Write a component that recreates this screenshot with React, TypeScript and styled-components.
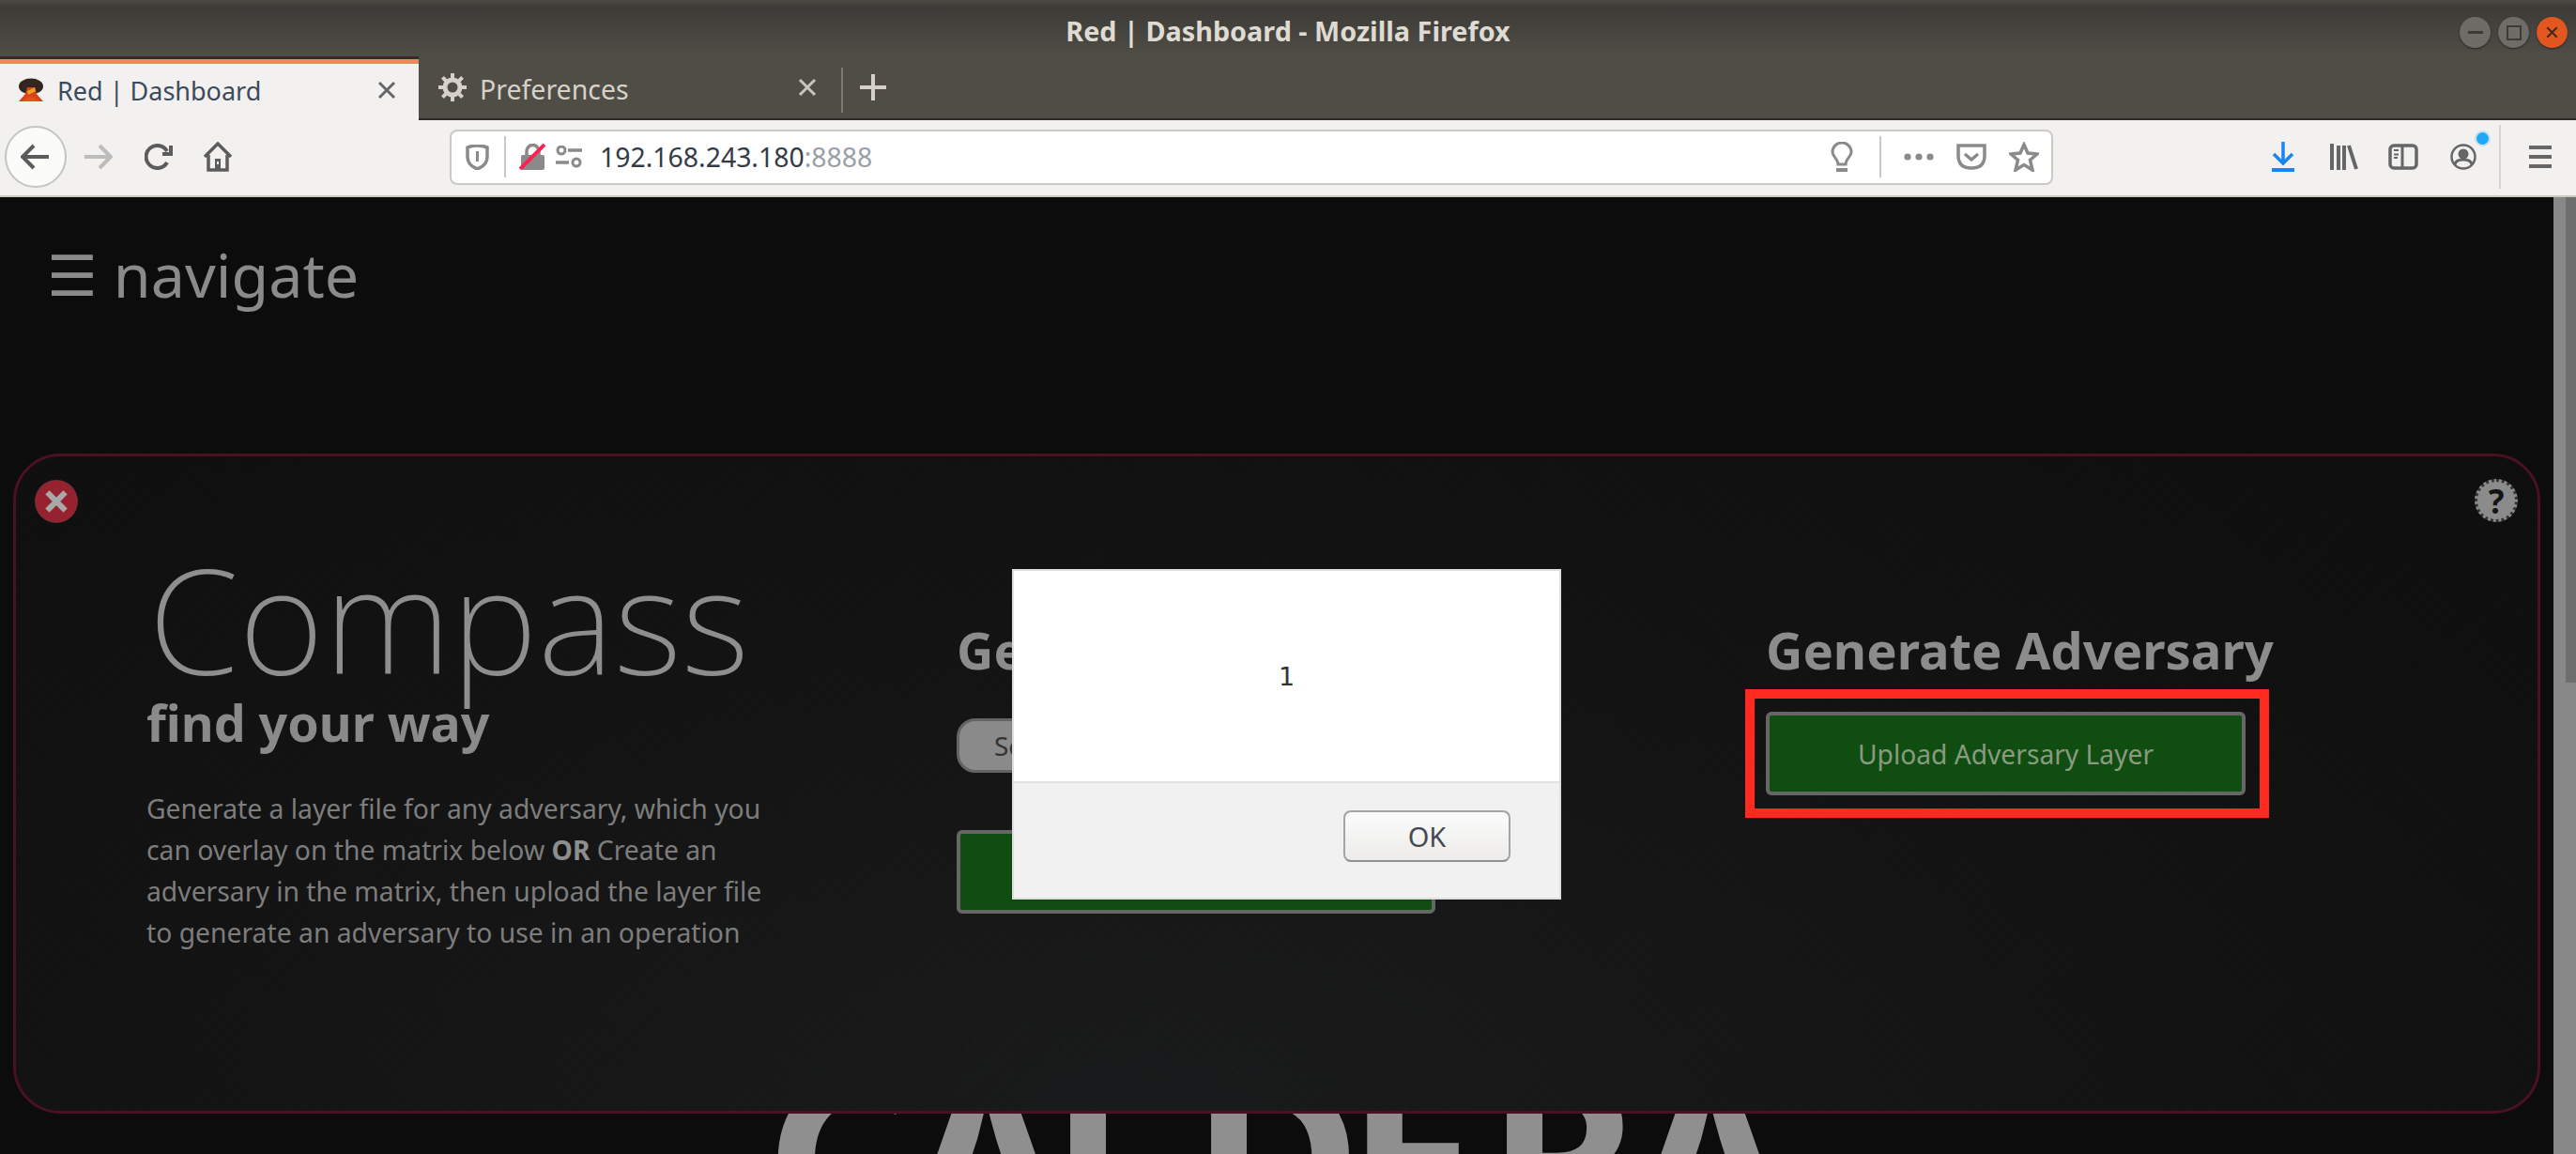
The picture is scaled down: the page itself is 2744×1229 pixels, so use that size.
import React from 'react';
import styled, { createGlobalStyle } from 'styled-components';

const GlobalStyle = createGlobalStyle`
    html, body {
        margin: 0;
        padding: 0;
        background: #0c0c0c;
        overflow: hidden;
    }
    * {
        box-sizing: border-box;
    }
`;

const UI_FONT = `"Noto Sans", "Open Sans", sans-serif`;

const Browser = styled.div`
    width: 2744px;
    height: 1229px;
    display: flex;
    flex-direction: column;
    overflow: hidden;
    font-family: ${UI_FONT};
`;

const TitleBar = styled.header`
    height: 60px;
    flex: none;
    display: flex;
    align-items: center;
    justify-content: center;
    position: relative;
    background: linear-gradient(#4b4a45 0, #3c3b37 8px, #504d46 60px);
    color: #dfdbd2;
    font-size: 28.8px;
    font-weight: 700;
    padding-top: 4px;
`;

const WindowButtons = styled.div`
    position: absolute;
    top: 18px;
    right: 9px;
    display: flex;
    gap: 8px;
`;

const WindowButton = styled.div<{ $close?: boolean }>`
    width: 33px;
    height: 33px;
    border-radius: 50%;
    display: flex;
    align-items: center;
    justify-content: center;
    background: ${(p) => (p.$close ? '#e2561f' : '#6d6c67')};
    box-shadow: 0 1px 2px rgba(0, 0, 0, 0.5);
`;

const TabStrip = styled.nav`
    height: 68px;
    flex: none;
    display: flex;
    background: #504d46;
    border-bottom: 2px solid #2c2b27;
`;

const ActiveTab = styled.div`
    width: 446px;
    height: 68px;
    flex: none;
    display: flex;
    align-items: center;
    padding: 0 24px 0 18px;
    background: #f2f1ef;
    border-top: 3px solid #2f2e2a;
    color: #3c4a5c;
    font-size: 27px;
    box-shadow: inset 0 5px 0 #f4845a;
    z-index: 1;
`;

const IdleTab = styled.div`
    width: 450px;
    height: 66px;
    flex: none;
    display: flex;
    align-items: center;
    padding: 0 26px 0 20px;
    color: #d6d2c9;
    font-size: 28.5px;
`;

const TabLabel = styled.span<{ $left: number; $top: number }>`
    flex: 1;
    margin-left: ${(p) => p.$left}px;
    margin-top: ${(p) => p.$top}px;
    white-space: nowrap;
`;

const TabDivider = styled.div`
    width: 2px;
    height: 48px;
    margin-top: 12px;
    background: #7c7a72;
`;

const NewTab = styled.div`
    margin: 12px 0 0 18px;
    height: 42px;
    display: flex;
    align-items: center;
`;

const Toolbar = styled.div`
    height: 82px;
    flex: none;
    display: flex;
    align-items: center;
    padding: 0 0 2px 5px;
    background: #f2f1ef;
    border-bottom: 2px solid #cbc9c4;
`;

const BackButton = styled.div`
    width: 66px;
    height: 66px;
    flex: none;
    border-radius: 50%;
    background: #fbfbfa;
    border: 2px solid #c4c4c1;
    display: flex;
    align-items: center;
    justify-content: center;
`;

const ToolIcon = styled.div<{ $left: number; $width: number }>`
    flex: none;
    width: ${(p) => p.$width}px;
    margin-left: ${(p) => p.$left}px;
    display: flex;
    align-items: center;
    justify-content: center;
    position: relative;
`;

const UrlBar = styled.div`
    width: 1708px;
    height: 59px;
    flex: none;
    margin-left: 231px;
    display: flex;
    align-items: center;
    background: #fff;
    border: 2px solid #cbc9c4;
    border-radius: 8px;
    padding-left: 15px;
`;

const UrlText = styled.span`
    flex: 1;
    margin-left: 19px;
    font-size: 28.4px;
    color: #333b46;
    white-space: nowrap;
`;

const UrlPort = styled.span`
    color: #9a9ea6;
`;

const UrlDivider = styled.div<{ $left: number }>`
    width: 2px;
    height: 44px;
    flex: none;
    margin-left: ${(p) => p.$left}px;
    background: #c9c8c4;
`;

const ToolDivider = styled.div`
    width: 2px;
    height: 68px;
    flex: none;
    margin-left: 24px;
    background: #d6d5d2;
`;

const Badge = styled.span`
    position: absolute;
    top: -12px;
    right: -13px;
    width: 13px;
    height: 13px;
    border-radius: 50%;
    background: #1fa8f5;
    box-shadow: 0 0 0 2px rgba(31, 168, 245, 0.2);
`;

const Viewport = styled.main`
    flex: 1;
    display: flex;
    position: relative;
    overflow: hidden;
    background: #0c0c0c;
`;

const PageContent = styled.div`
    flex: 1;
    min-width: 0;
    display: flex;
    flex-direction: column;
`;

const Scrollbar = styled.aside`
    width: 24px;
    flex: none;
    display: flex;
    justify-content: flex-end;
    align-items: flex-start;
    background: #888;
`;

const ScrollThumb = styled.div`
    width: 11px;
    height: 517px;
    background: #6e6e6e;
`;

const NavToggle = styled.div`
    display: flex;
    align-items: center;
    height: 100px;
    margin-top: 50px;
    padding-left: 50px;
    color: #8a8a8a;
    font-size: 64.6px;
    line-height: 1;
`;

const NavGlyph = styled.span`
    font-family: "DejaVu Sans", sans-serif;
    font-size: 60px;
    margin-top: 3px;
    margin-right: 17px;
`;

const Logo = styled.div`
    display: flex;
    margin-top: 780px;
    padding-left: 815px;
    color: #8f8f8f;
    font-weight: 660;
    font-size: 248px;
    line-height: 1;
`;

const LogoLetter = styled.span<{ $width: number }>`
    flex: none;
    width: ${(p) => p.$width}px;
`;

const Modal = styled.section`
    position: absolute;
    top: 273px;
    left: 14px;
    width: 2692px;
    height: 703px;
    display: grid;
    grid-template-columns: 863px 862px 1fr;
    padding-left: 139px;
    border: 3px solid #4a1120;
    border-radius: 50px;
    background:
        repeating-linear-gradient(45deg, rgba(255, 255, 255, 0.006) 0 1px, transparent 1px 3px),
        repeating-linear-gradient(-45deg, rgba(0, 0, 0, 0.1) 0 1px, transparent 1px 3px),
        radial-gradient(ellipse at 45% 100%, #1a1b1c 0, #131313 55%, #0e0e0e 100%);
`;

const CloseBadge = styled.div`
    position: absolute;
    top: 25px;
    left: 20px;
    width: 46px;
    height: 46px;
    border-radius: 50%;
    background: #97222f;
    border: 1px dotted #444;
    display: flex;
    align-items: center;
    justify-content: center;
`;

const HelpBadge = styled.div`
    position: absolute;
    top: 24px;
    right: 21px;
    width: 46px;
    height: 46px;
    border-radius: 50%;
    background: #8b8b8b;
    border: 3px dotted #333;
    color: #141414;
    display: flex;
    align-items: center;
    justify-content: center;
    font-size: 35px;
    font-weight: 700;
`;

const Column = styled.div<{ $top: number }>`
    padding-top: ${(p) => p.$top}px;
    min-width: 0;
    display: flex;
    flex-direction: column;
    align-items: flex-start;
`;

const Heading = styled.h1`
    margin: 0 0 0 2px;
    color: #8e8e8e;
    font-size: 156px;
    font-weight: 200;
    line-height: 150px;
    white-space: nowrap;
`;

const Tagline = styled.h2`
    margin: 7px 0 0;
    color: #8a8a8a;
    font-size: 53.7px;
    font-weight: 700;
    line-height: 60px;
    white-space: nowrap;
`;

const Blurb = styled.p`
    margin: 39px 0 0;
    width: 670px;
    color: #7d7d7d;
    font-size: 28.3px;
    line-height: 44px;

    b {
        color: #8e8e8e;
    }
`;

const SectionTitle = styled.h3`
    margin: 0;
    color: #8c8c8c;
    font-size: 54.4px;
    font-weight: 700;
    line-height: 60px;
    white-space: nowrap;
`;

const SelectBox = styled.div`
    width: 440px;
    height: 58px;
    margin-top: 43px;
    padding-left: 37px;
    display: flex;
    align-items: center;
    background: #8a8a8a;
    border: 3px solid #646464;
    border-radius: 20px;
    color: #333;
    font-size: 28px;
`;

const GreenButton = styled.div<{ $marked?: boolean }>`
    display: flex;
    align-items: center;
    justify-content: center;
    position: relative;
    background: #0f4d10;
    border: 4px solid #666;
    border-radius: 6px;
    color: #8a9a80;
    font-size: 28.2px;

    ${(p) =>
        p.$marked &&
        `
        &::after {
            content: '';
            position: absolute;
            inset: -28px -29px -28px -26px;
            border: 10px solid #ff2a1e;
        }
    `}
`;

const MiddleButton = styled(GreenButton)`
    width: 510px;
    height: 89px;
    margin-top: 61px;
`;

const UploadButton = styled(GreenButton)`
    width: 511px;
    height: 89px;
    margin-top: 36px;
`;

const Alert = styled.div`
    position: absolute;
    top: 396px;
    left: 1078px;
    width: 585px;
    height: 352px;
    display: flex;
    flex-direction: column;
    background: #f1f1f1;
    border: 2px solid #dedede;
    box-shadow: 0 0 1px rgba(0, 0, 0, 0.4);
`;

const AlertBody = styled.div`
    height: 226px;
    flex: none;
    display: flex;
    align-items: center;
    justify-content: center;
    background: #fff;
    border-bottom: 2px solid #e2e2e2;
    color: #333;
    font-family: "DejaVu Sans", sans-serif;
    font-size: 27px;
`;

const AlertFooter = styled.div`
    flex: 1;
    display: flex;
    align-items: flex-start;
    justify-content: flex-end;
    padding: 29px 52px 0 0;
`;

const OkButton = styled.div`
    width: 178px;
    height: 55px;
    display: flex;
    align-items: center;
    justify-content: center;
    border: 2px solid #a4a4a4;
    border-bottom-color: #909090;
    border-radius: 8px;
    background: linear-gradient(#fcfcfc, #ecebe9);
    color: #454a52;
    font-size: 29px;
`;

const Favicon = () => (
    <svg width="30" height="26" viewBox="0 0 30 26">
        <ellipse cx="15" cy="9" rx="13" ry="8.5" fill="#332620" />
        <path d="M2 25 L9 17 L11 10 L19 10 L21 17 L28 25 Z" fill="#d8421c" />
        <path d="M11 14 L19 10 L20 14 L12 18 Z" fill="#f0a020" />
        <path d="M6 25 L12 20 L18 21 L24 25 Z" fill="#e8501e" />
    </svg>
);

const CloseIcon = ({ color, size = 20, weight = 3 }: { color: string; size?: number; weight?: number }) => (
    <svg width={size} height={size} viewBox="0 0 20 20">
        <path d="M2 2 L18 18 M18 2 L2 18" stroke={color} strokeWidth={weight} fill="none" />
    </svg>
);

const GearIcon = () => (
    <svg width="32" height="32" viewBox="0 0 32 32" fill="none" stroke="#d6d2c9">
        <circle cx="16" cy="16" r="8" strokeWidth="5" />
        <path
            d="M16 1 V7 M16 25 V31 M1 16 H7 M25 16 H31 M5.4 5.4 L9.6 9.6 M22.4 22.4 L26.6 26.6 M26.6 5.4 L22.4 9.6 M9.6 22.4 L5.4 26.6"
            strokeWidth="4"
        />
    </svg>
);

const Arrow = ({ color, flip }: { color: string; flip?: boolean }) => (
    <svg width="32" height="28" viewBox="0 0 32 28" fill="none" stroke={color} strokeWidth="4">
        <path d={flip ? 'M30 14 H1 M14 2 L2 14 L14 26' : 'M2 14 H31 M18 2 L30 14 L18 26'} />
    </svg>
);

const ReloadIcon = () => (
    <svg width="30" height="28" viewBox="0 0 30 28" fill="none" stroke="#5c5c5c" strokeWidth="4">
        <path d="M24 20 A12 12 0 1 1 24 8" />
        <path d="M28 2 V11 H19" />
    </svg>
);

const HomeIcon = () => (
    <svg width="32" height="32" viewBox="0 0 32 32" fill="none" stroke="#5c5c5c" strokeWidth="3.5">
        <path d="M2 16 L16 2 L30 16" />
        <path d="M6 14 V30 H26 V14" />
        <rect x="13" y="18" width="6" height="12" fill="#5c5c5c" stroke="none" />
        <rect x="15" y="21" width="2" height="3" fill="#f2f1ef" stroke="none" />
    </svg>
);

const ShieldIcon = () => (
    <svg width="25" height="27" viewBox="0 0 25 27" fill="none">
        <path d="M2 3 Q12 -1 23 3 V13 Q23 22 12.5 26 Q2 22 2 13 Z" stroke="#8a8a8a" strokeWidth="3.5" />
        <path d="M12.5 7 V18" stroke="#8a8a8a" strokeWidth="3" />
    </svg>
);

const BrokenLockIcon = () => (
    <svg width="28" height="28" viewBox="0 0 28 28" fill="none">
        <path d="M8 13 V8 A6.5 6.5 0 0 1 21 8 V13" stroke="#8a8a8a" strokeWidth="3.5" />
        <rect x="2" y="12" width="25" height="16" rx="2" fill="#8a8a8a" />
        <path d="M1 27 L27 1" stroke="#ff1f55" strokeWidth="4" />
    </svg>
);

const SlidersIcon = () => (
    <svg width="28" height="24" viewBox="0 0 28 24" fill="none" stroke="#8a8a8a">
        <circle cx="6" cy="5" r="4" strokeWidth="3" />
        <path d="M13 5 H28 M0 18 H14" strokeWidth="3.5" />
        <circle cx="22" cy="18" r="4" strokeWidth="3" />
    </svg>
);

const BulbIcon = () => (
    <svg width="24" height="32" viewBox="0 0 24 32" fill="none" stroke="#8a8a8a" strokeWidth="3">
        <path d="M8 24 C8 18 2 16 2 11 A10 10 0 0 1 22 11 C22 16 16 18 16 24 Z" />
        <path d="M6 30 H18" strokeWidth="4" />
    </svg>
);

const DotsIcon = () => (
    <svg width="32" height="8" viewBox="0 0 32 8" fill="#8a8a8a">
        <circle cx="4" cy="4" r="3.6" />
        <circle cx="16" cy="4" r="3.6" />
        <circle cx="28" cy="4" r="3.6" />
    </svg>
);

const PocketIcon = () => (
    <svg width="32" height="28" viewBox="0 0 32 28" fill="none" stroke="#8a8a8a" strokeWidth="3.5">
        <path d="M2 2 H30 V13 Q30 26 16 26 Q2 26 2 13 Z" />
        <path d="M9 11 L16 17 L23 11" />
    </svg>
);

const StarIcon = () => (
    <svg width="32" height="32" viewBox="0 0 32 32" fill="none" stroke="#8a8a8a" strokeWidth="3.5">
        <path d="M16 3 L20 12 L30 13 L22.5 19.5 L25 30 L16 24.5 L7 30 L9.5 19.5 L2 13 L12 12 Z" />
    </svg>
);

const DownloadIcon = () => (
    <svg width="24" height="32" viewBox="0 0 24 32" fill="none" stroke="#1a84f0" strokeWidth="3.5">
        <path d="M12 0 V23 M2 13 L12 23 L22 13" />
        <path d="M0 30 H24" strokeWidth="4" />
    </svg>
);

const LibraryIcon = () => (
    <svg width="30" height="28" viewBox="0 0 30 28" fill="none" stroke="#666" strokeWidth="4">
        <path d="M2 0 V28 M9 2 V28 M15 2 V28 M20 2 L28 27" />
    </svg>
);

const SidebarIcon = () => (
    <svg width="32" height="28" viewBox="0 0 32 28" fill="none" stroke="#666">
        <rect x="2" y="2" width="28" height="24" rx="4" strokeWidth="3.5" />
        <path d="M15 2 V26" strokeWidth="3" />
        <path d="M6 7 H11 M6 11.5 H11 M6 15 H10" strokeWidth="2" />
    </svg>
);

const AccountIcon = () => (
    <svg width="28" height="28" viewBox="0 0 28 28" fill="none">
        <circle cx="14" cy="14" r="12.5" stroke="#666" strokeWidth="2.5" />
        <circle cx="14" cy="11" r="5.5" fill="#666" />
        <path d="M5 22 Q6 17 14 17 Q22 17 23 22" stroke="#666" strokeWidth="3" />
    </svg>
);

const MenuIcon = () => (
    <svg width="24" height="24" viewBox="0 0 24 24" fill="#666">
        <rect width="24" height="4" y="0" />
        <rect width="24" height="4" y="10" />
        <rect width="24" height="4" y="20" />
    </svg>
);

const logoLetters: [string, number][] = [
    ['C', 150],
    ['A', 154],
    ['L', 150],
    ['D', 165],
    ['E', 150],
    ['R', 152],
    ['A', 160],
];

const App: React.FC = () => {
    return (
        <Browser>
            <GlobalStyle />

            <TitleBar>
                Red | Dashboard - Mozilla Firefox
                <WindowButtons>
                    <WindowButton>
                        <svg width="16" height="4" viewBox="0 0 16 4"><rect width="16" height="3" fill="#3c3b37" /></svg>
                    </WindowButton>
                    <WindowButton>
                        <svg width="16" height="16" viewBox="0 0 16 16"><rect x="1" y="1" width="14" height="14" fill="none" stroke="#3c3b37" strokeWidth="2" /></svg>
                    </WindowButton>
                    <WindowButton $close>
                        <CloseIcon color="#3c2a1a" size={13} />
                    </WindowButton>
                </WindowButtons>
            </TitleBar>

            <TabStrip>
                <ActiveTab>
                    <Favicon />
                    <TabLabel $left={13} $top={2}>Red | Dashboard</TabLabel>
                    <CloseIcon color="#666" />
                </ActiveTab>
                <IdleTab>
                    <GearIcon />
                    <TabLabel $left={13} $top={4}>Preferences</TabLabel>
                    <CloseIcon color="#c9c6be" />
                </IdleTab>
                <TabDivider />
                <NewTab>
                    <svg width="28" height="28" viewBox="0 0 28 28">
                        <path d="M14 0 V28 M0 14 H28" stroke="#d6d2c9" strokeWidth="4" />
                    </svg>
                </NewTab>
            </TabStrip>

            <Toolbar>
                <BackButton>
                    <Arrow color="#5c5c5c" flip />
                </BackButton>
                <ToolIcon $left={17} $width={32}>
                    <Arrow color="#bcbcbc" />
                </ToolIcon>
                <ToolIcon $left={34} $width={30}>
                    <ReloadIcon />
                </ToolIcon>
                <ToolIcon $left={32} $width={32}>
                    <HomeIcon />
                </ToolIcon>

                <UrlBar>
                    <ShieldIcon />
                    <UrlDivider $left={16} />
                    <ToolIcon $left={14} $width={28}>
                        <BrokenLockIcon />
                    </ToolIcon>
                    <ToolIcon $left={11} $width={28}>
                        <SlidersIcon />
                    </ToolIcon>
                    <UrlText>
                        192.168.243.180<UrlPort>:8888</UrlPort>
                    </UrlText>
                    <ToolIcon $left={0} $width={24}>
                        <BulbIcon />
                    </ToolIcon>
                    <UrlDivider $left={28} />
                    <ToolIcon $left={24} $width={32}>
                        <DotsIcon />
                    </ToolIcon>
                    <ToolIcon $left={24} $width={32}>
                        <PocketIcon />
                    </ToolIcon>
                    <ToolIcon $left={24} $width={32}>
                        <StarIcon />
                    </ToolIcon>
                    <ToolIcon $left={13} $width={0} />
                </UrlBar>

                <ToolIcon $left={233} $width={24}>
                    <DownloadIcon />
                </ToolIcon>
                <ToolIcon $left={38} $width={30}>
                    <LibraryIcon />
                </ToolIcon>
                <ToolIcon $left={32} $width={32}>
                    <SidebarIcon />
                </ToolIcon>
                <ToolIcon $left={34} $width={28}>
                    <AccountIcon />
                    <Badge />
                </ToolIcon>
                <ToolDivider />
                <ToolIcon $left={30} $width={24}>
                    <MenuIcon />
                </ToolIcon>
            </Toolbar>

            <Viewport>
                <PageContent>
                    <NavToggle>
                        <NavGlyph>☰</NavGlyph>navigate
                    </NavToggle>
                    <Logo>
                        {logoLetters.map(([letter, width], i) => (
                            <LogoLetter key={i} $width={width}>
                                {letter}
                            </LogoLetter>
                        ))}
                    </Logo>
                </PageContent>
                <Scrollbar>
                    <ScrollThumb />
                </Scrollbar>

                <Modal>
                    <CloseBadge>
                        <CloseIcon color="#a8a8a8" size={24} weight={5} />
                    </CloseBadge>
                    <HelpBadge>?</HelpBadge>

                    <Column $top={97}>
                        <Heading>Compass</Heading>
                        <Tagline>find your way</Tagline>
                        <Blurb>
                            Generate a layer file for any adversary, which you can overlay on the matrix below{' '}
                            <b>OR</b> Create an adversary in the matrix, then upload the layer file to generate an
                            adversary to use in an operation
                        </Blurb>
                    </Column>

                    <Column $top={176}>
                        <SectionTitle>Generate Layer</SectionTitle>
                        <SelectBox>Select an adversary</SelectBox>
                        <MiddleButton>Generate Layer</MiddleButton>
                    </Column>

                    <Column $top={176}>
                        <SectionTitle>Generate Adversary</SectionTitle>
                        <UploadButton $marked>Upload Adversary Layer</UploadButton>
                    </Column>
                </Modal>

                <Alert>
                    <AlertBody>1</AlertBody>
                    <AlertFooter>
                        <OkButton>OK</OkButton>
                    </AlertFooter>
                </Alert>
            </Viewport>
        </Browser>
    );
};

export default App;
